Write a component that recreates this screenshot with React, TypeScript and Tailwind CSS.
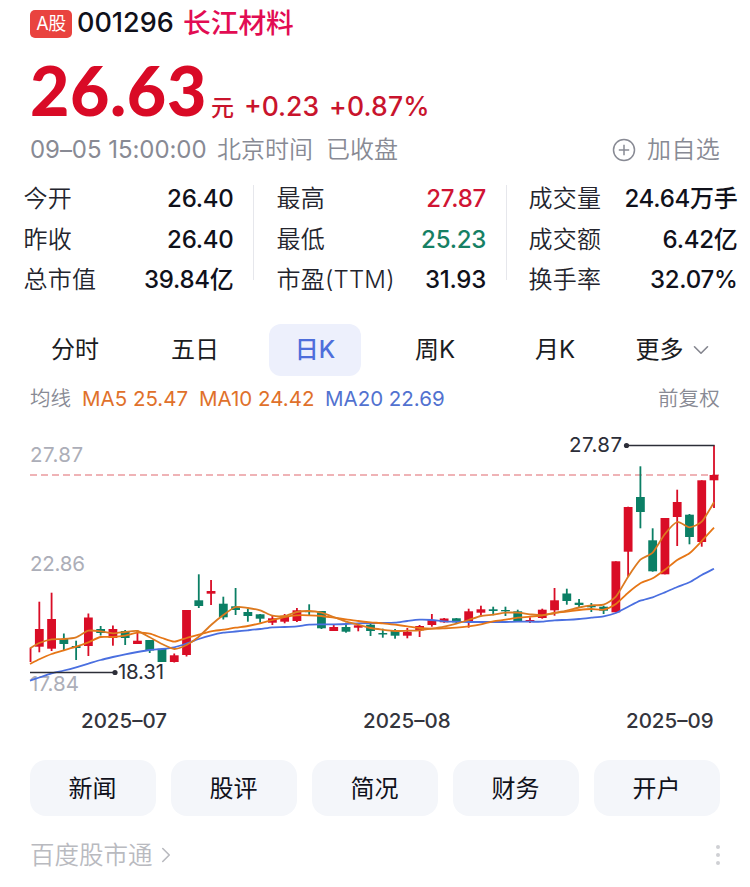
import { ChevronDown, ChevronRight } from "lucide-react";

type Candle = {
  up: boolean;
  high: number;
  low: number;
  top: number;
  bottom: number;
};

const STEP = 12.267;
const ORIGIN = 27.05;
const CHART_TOP = 425;

const c = (up: number, high: number, low: number, top: number, bottom: number): Candle => ({
  up: up === 1,
  high,
  low,
  top,
  bottom,
});

const candles: Candle[] = [
  c(1, 648, 662, 648, 662),
  c(1, 601.7, 652.3, 629, 646.7),
  c(1, 592.7, 651, 619, 648.7),
  c(0, 633.5, 650, 639, 644),
  c(0, 640.7, 660, 646, 648),
  c(1, 613.5, 656, 617.5, 646),
  c(0, 626, 635.5, 629, 633),
  c(1, 625.5, 645.7, 629, 638),
  c(0, 630, 645, 631, 638),
  c(1, 630, 643.7, 640.7, 644),
  c(0, 640, 653, 640, 650.5),
  c(0, 648.7, 662, 648.7, 662),
  c(1, 653.5, 662.5, 655.3, 662),
  c(1, 610, 656.5, 610, 655),
  c(0, 574.3, 608, 600.3, 606),
  c(1, 580, 605, 591, 593.7),
  c(0, 596.7, 619.5, 603.7, 617.3),
  c(0, 588, 615, 606.3, 610),
  c(0, 609, 621.7, 612, 616),
  c(0, 614, 622.7, 614.3, 618.7),
  c(1, 616, 625, 618.3, 622.7),
  c(1, 614, 623.3, 616.7, 621.7),
  c(1, 608, 622, 610.3, 621),
  c(0, 604.3, 615, 611, 612.2),
  c(0, 611, 629, 611, 628.3),
  c(1, 624.7, 631, 627, 631),
  c(0, 622.7, 632.7, 627, 631.7),
  c(1, 624.7, 631.3, 625.3, 627.7),
  c(0, 624, 636, 624.7, 631),
  c(0, 628.7, 637.7, 633, 634.5),
  c(0, 629, 638.7, 631, 635.7),
  c(1, 628, 638.3, 631.7, 635.7),
  c(1, 625, 637, 626, 630.3),
  c(1, 614, 626.7, 620, 625),
  c(1, 618, 622.7, 618.5, 622.3),
  c(0, 618, 623.3, 618.3, 622.3),
  c(1, 608.7, 627.7, 611.3, 621),
  c(1, 605.7, 615, 609.3, 612.7),
  c(0, 606.7, 615.3, 609.3, 611),
  c(0, 606.7, 616, 610, 611.3),
  c(0, 609.7, 622, 611.3, 621),
  c(1, 617.3, 623, 620, 621.3),
  c(1, 608.7, 618.7, 609.7, 618),
  c(1, 588, 615.7, 600.3, 610.3),
  c(0, 588.7, 604.7, 593.5, 601),
  c(0, 599, 608, 602.7, 605),
  c(0, 603, 612, 605.7, 607.3),
  c(0, 605.7, 614, 606.7, 610.7),
  c(1, 561.3, 612.3, 561.3, 612.3),
  c(1, 506.7, 576.7, 507, 551.7),
  c(0, 466.3, 528.3, 497, 512),
  c(0, 528.3, 571.7, 540.3, 571.3),
  c(1, 518, 574.3, 518, 574.3),
  c(1, 489.7, 546, 502, 517),
  c(0, 514, 544.3, 514.7, 537),
  c(1, 480.3, 546.7, 480.3, 542),
  c(1, 445.3, 508, 475, 480.3),
];

// One value per candle, in the same vertical units as the candles.
const ma5 = [
  648.3, 643, 639.3, 639, 637.3, 630.7, 631.3, 633.3, 632, 631, 637.3, 644, 649, 645, 636.7, 625,
  615, 607, 608, 610.3, 615.7, 616, 612, 611, 612.7, 617, 621.7, 624.7, 628, 629.7, 631, 630.7,
  630.3, 628.7, 626.7, 623.7, 620, 616, 614.7, 612.7, 612.7, 614.3, 615.3, 613, 610.7, 607.5,
  605.3, 604.7, 596.7, 576.7, 559.7, 552.7, 534, 522, 527.3, 521.7, 502.3,
];
const ma10 = [
  664, 659.3, 654, 650.3, 646.7, 642.3, 637, 637, 635.7, 632.7, 633.7, 638, 641.7, 638, 634.7,
  631.3, 629.7, 627.7, 626, 623.3, 620, 617, 615.3, 615.3, 616, 617.7, 619.3, 621, 622.3, 623.3,
  624.7, 626.3, 628, 628.7, 628.3, 627.7, 626.3, 624.3, 621.3, 619.7, 617.7, 616.7, 615.3, 613,
  611.7, 610, 609, 609.7, 604, 592.7, 583.3, 578.3, 569.7, 560, 553.3, 541, 527.7,
];
const ma20 = [
  680.7, 677.5, 673.3, 670.5, 667.3, 663.7, 660, 657, 654.3, 652, 650, 649, 647.3, 643.5, 639,
  635.3, 632.7, 631.5, 630.3, 629, 627.3, 627, 626.3, 624.7, 624.4, 624.3, 624, 623.3, 623, 623,
  622.7, 621, 619.7, 620, 621.3, 621.7, 622, 622, 622, 622, 621.7, 621.7, 621.7, 620.3, 619.8,
  619, 617.7, 616.3, 613, 606.7, 600.7, 597.3, 592.3, 587, 582.3, 575, 568.7,
];

const xAt = (i: number) => (i === 0 ? 30 : ORIGIN + i * STEP);

// Joins the values with a lightly rounded cubic spline.
function linePath(values: number[]): string {
  const pts = values.map((v, i) => [xAt(i), v] as const);
  let d = `M${pts[0][0]} ${pts[0][1]}`;
  for (let i = 0; i < pts.length - 1; i++) {
    const p0 = pts[Math.max(0, i - 1)];
    const p1 = pts[i];
    const p2 = pts[i + 1];
    const p3 = pts[Math.min(pts.length - 1, i + 2)];
    const k = 9;
    d += `C${p1[0] + (p2[0] - p0[0]) / k} ${p1[1] + (p2[1] - p0[1]) / k} ${p2[0] - (p3[0] - p1[0]) / k} ${p2[1] - (p3[1] - p1[1]) / k} ${p2[0]} ${p2[1]}`;
  }
  return d;
}

function KLineChart() {
  return (
    <svg
      className="block h-[275px] w-[750px]"
      viewBox={`0 ${CHART_TOP} 750 275`}
      fontFamily='Inter, "Liberation Sans", sans-serif'
      fontSize="20.5"
    >
      <defs>
        <clipPath id="plot">
          <rect x="29.6" y={CHART_TOP} width="691" height="275" />
        </clipPath>
      </defs>
      <g fill="#acaeb8">
        <text x="30" y="461.5" textLength="53">27.87</text>
        <text x="30" y="570.5" textLength="55">22.86</text>
        <text x="30" y="691" textLength="49">17.84</text>
      </g>
      <line x1="30" x2="720" y1="475" y2="475" stroke="#ea9a9f" strokeWidth="1.5" strokeDasharray="7 4" />
      <g clipPath="url(#plot)">
        {candles.map((k, i) => {
          const x = i === 0 ? ORIGIN : xAt(i);
          const fill = k.up ? "#d90d26" : "#0b7f65";
          return (
            <g key={i} fill={fill}>
              <rect x={x - 0.9} y={k.high} width="1.8" height={k.low - k.high} />
              <rect x={x - 4.4} y={k.top} width="8.8" height={k.bottom - k.top} />
            </g>
          );
        })}
      </g>
      <g fill="none" strokeWidth="1.8" strokeLinejoin="round">
        <path d={linePath(ma20)} stroke="#4a6fe0" />
        <path d={linePath(ma10)} stroke="#e67616" />
        <path d={linePath(ma5)} stroke="#dc7a20" />
      </g>
      <g stroke="#2c2e38" strokeWidth="1.5">
        <line x1="30" x2="114" y1="672.5" y2="672.5" />
        <line x1="626" x2="714.6" y1="445.5" y2="445.5" />
      </g>
      <g fill="#2c2e38">
        <circle cx="115" cy="672.5" r="2.6" />
        <circle cx="626.5" cy="445.5" r="2.6" />
        <text x="118" y="678.5" textLength="46">18.31</text>
        <text x="569" y="451.5" textLength="53">27.87</text>
      </g>
    </svg>
  );
}

const stats = [
  [
    { label: "今开", value: "26.40", tone: "text-[#10111b]" },
    { label: "昨收", value: "26.40", tone: "text-[#10111b]" },
    { label: "总市值", value: "39.84亿", tone: "text-[#10111b]" },
  ],
  [
    { label: "最高", value: "27.87", tone: "text-[#d01433]" },
    { label: "最低", value: "25.23", tone: "text-[#168064]" },
    { label: "市盈(TTM)", value: "31.93", tone: "text-[#10111b]" },
  ],
  [
    { label: "成交量", value: "24.64万手", tone: "text-[#10111b]" },
    { label: "成交额", value: "6.42亿", tone: "text-[#10111b]" },
    { label: "换手率", value: "32.07%", tone: "text-[#10111b]" },
  ],
];

const columnStyles = [
  "w-[254px] border-r pl-[23.5px] pr-[19.5px]",
  "w-[253px] border-r pl-[22.5px] pr-5",
  "w-[243px] pl-[21.5px] pr-[12.5px]",
];

const tabs = ["分时", "五日", "日K", "周K", "月K"];
const actions = ["新闻", "股评", "简况", "财务", "开户"];

export default function App() {
  return (
    <main className="flex h-[887px] w-[750px] flex-col overflow-hidden whitespace-nowrap bg-white font-[Inter,'Noto_Sans_CJK_SC',sans-serif] text-[#10111b]">
      <header className="flex h-[47px] items-center pl-[30px]">
        <span className="flex h-7 w-[42px] items-center justify-center rounded-[5px] bg-[#e9433f] text-[18px] tracking-[-0.5px] text-white">
          A股
        </span>
        <span className="ml-[5px] w-[106px] text-[27px] font-medium">001296</span>
        <h1 className="text-[27.7px] font-medium text-[#e20c53]">长江材料</h1>
      </header>

      <section className="flex h-[84px] items-baseline pl-[30px] pt-px leading-[84px] text-[#c9142d]">
        <span className="w-[181px] font-[Lato,sans-serif] text-[68px] font-black tracking-[0.6px] text-[#d90a26]">26.63</span>
        <span className="w-[33px] text-[23px] font-medium">元</span>
        <span className="w-[85px] text-[26.5px] font-medium">+0.23</span>
        <span className="text-[26.5px] font-medium tracking-[0.2px]">+0.87%</span>
      </section>

      <section className="flex h-[38px] items-center justify-between pl-[30px] pr-[30px] text-[24px] font-[350] text-[#888a94]">
        <div className="flex">
          <span className="w-[187px] font-normal tracking-[-0.05px]">09–05 15:00:00</span>
          <span className="w-[109px]">北京时间</span>
          <span>已收盘</span>
        </div>
        <button className="flex items-center gap-[11px]">
          <svg className="size-6" viewBox="0 0 24 24" fill="none" stroke="currentColor" strokeWidth="1.5">
            <circle cx="12" cy="12" r="10.5" />
            <path d="M12 6.8v10.4M6.8 12h10.4" />
          </svg>
          <span className="tracking-[0.3px]">加自选</span>
        </button>
      </section>

      <section className="flex h-[131px] pt-4">
        {stats.map((column, i) => (
          <dl key={i} className={`h-[95px] border-[#e6e7ec] ${columnStyles[i]}`}>
            {column.map((item) => (
              <div
                key={item.label}
                className="flex h-[40.5px] -translate-y-[6px] items-center justify-between text-[24px]"
              >
                <dt className="font-[350] tracking-[0.2px] text-[#23242d]">{item.label}</dt>
                <dd className={`font-medium tracking-[-0.25px] ${item.tone}`}>{item.value}</dd>
              </div>
            ))}
          </dl>
        ))}
      </section>

      <nav className="mt-6 flex h-[52px] px-[15px] text-[24px] text-[#1b1c22]">
        {tabs.map((tab) => (
          <button key={tab} className="flex w-[120px] justify-center">
            <span
              className={
                tab === "日K"
                  ? "flex h-full w-[92px] items-center justify-center rounded-xl bg-[#edf0fc] font-medium text-[#4e6edb]"
                  : "flex h-full items-center"
              }
            >
              {tab}
            </span>
          </button>
        ))}
        <button className="flex w-[119px] items-center justify-center gap-1">
          更多
          <ChevronDown size={26} strokeWidth={1.5} className="text-[#85868f]" />
        </button>
      </nav>

      <section className="flex h-[49px] items-center pb-[3px] pl-[30px] pr-[30px] text-[20.5px]">
        <span className="w-[52px] font-[350] text-[#888a94]">均线</span>
        <span className="w-[117px] text-[#e0712b]">MA5 25.47</span>
        <span className="w-[126px] text-[#e0712b]">MA10 24.42</span>
        <span className="text-[#5272d0]">MA20 22.69</span>
        <span className="ml-auto font-[350] tracking-[0.2px] text-[#888a94]">前复权</span>
      </section>

      <KLineChart />

      <div className="flex h-[40px] items-center pl-[81px] pt-0.5 text-[20.5px] font-medium text-[#34353d]">
        <span className="w-[282px]">2025–07</span>
        <span className="w-[263px]">2025–08</span>
        <span>2025–09</span>
      </div>

      <div className="mt-5 grid grid-cols-5 gap-[15px] px-[30px]">
        {actions.map((label) => (
          <button key={label} className="h-14 rounded-2xl bg-[#f4f6fa] pr-px pt-0.5 text-[24px]">
            {label}
          </button>
        ))}
      </div>

      <footer className="flex flex-1 items-center justify-between pl-[30px] pr-[30px] pt-[7px] text-[#b9babf]">
        <a className="flex items-center text-[24.5px] font-[350]">
          百度股市通
          <ChevronRight size={26} strokeWidth={1.5} />
        </a>
        <div className="flex flex-col gap-1">
          <i className="size-1 rounded-full bg-[#cfd0d4]" />
          <i className="size-1 rounded-full bg-[#cfd0d4]" />
          <i className="size-1 rounded-full bg-[#cfd0d4]" />
        </div>
      </footer>
    </main>
  );
}
